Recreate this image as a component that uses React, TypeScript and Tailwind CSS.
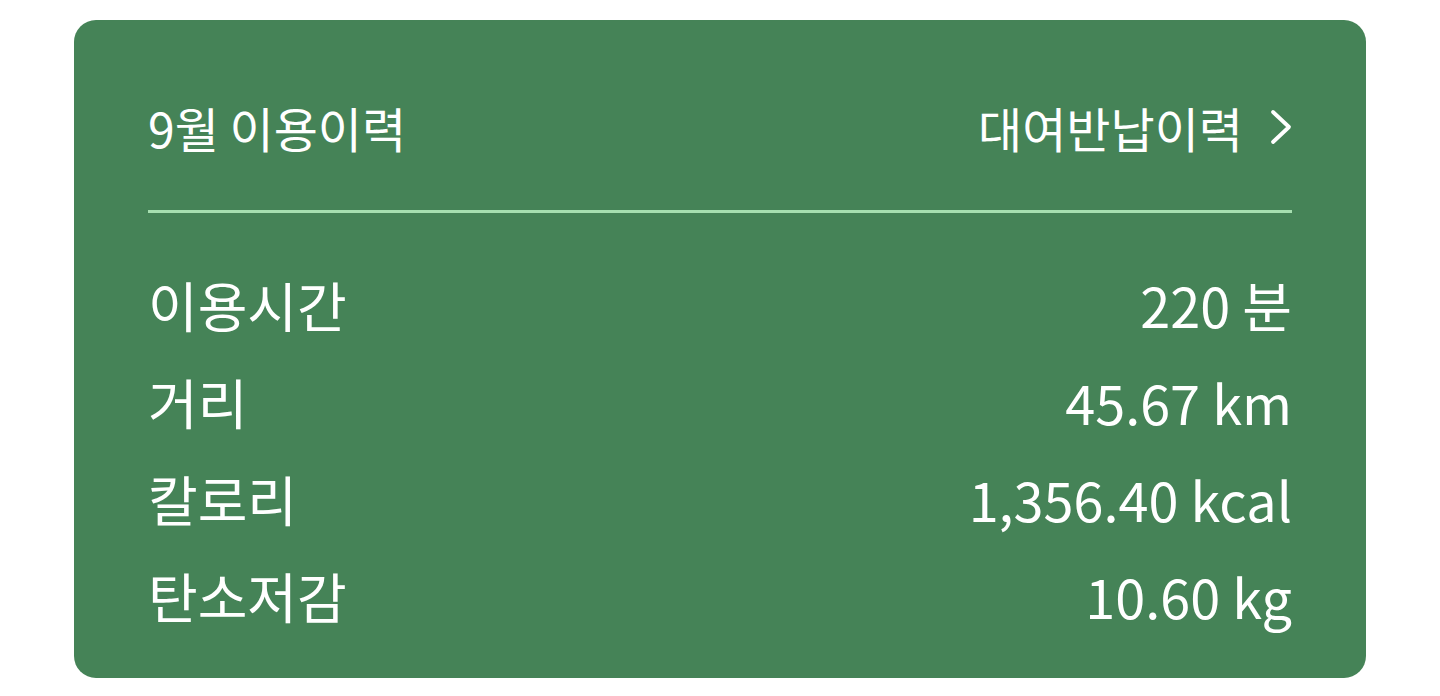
import React from "react";

const rows = [
  { label: "이용시간", value: "220 분" },
  { label: "거리", value: "45.67 km" },
  { label: "칼로리", value: "1,356.40 kcal" },
  { label: "탄소저감", value: "10.60 kg" },
];

export default function App() {
  return (
    <div className="min-h-screen bg-white pt-[20px] px-[74px] font-['Noto_Sans_CJK_KR',sans-serif]">
      <div className="rounded-[22px] bg-[#458357] px-[74px] pt-[60px] pb-[34px] text-white">
        {/* Header */}
        <div className="flex items-center justify-between h-[94px]">
          <span className="text-[48px] leading-[94px]">9월 이용이력</span>
          <a href="#history" className="flex items-center gap-[27px] text-[48px] leading-[94px]">
            대여반납이력
            <svg width="22" height="36" viewBox="0 0 22 36" fill="none">
              <polyline
                points="3,3 19,18 3,33"
                stroke="white"
                strokeWidth="3.8"
                strokeLinecap="round"
                strokeLinejoin="round"
              />
            </svg>
          </a>
        </div>

        <div className="mt-[36px] h-[3px] bg-[#a6dfb0]" />

        {/* Stats */}
        <div className="mt-[43px] flex flex-col">
          {rows.map((r) => (
            <div key={r.label} className="flex items-center justify-between h-[97px] text-[54px] leading-[97px]">
              <span>{r.label}</span>
              <span>{r.value}</span>
            </div>
          ))}
        </div>
      </div>
    </div>
  );
}
